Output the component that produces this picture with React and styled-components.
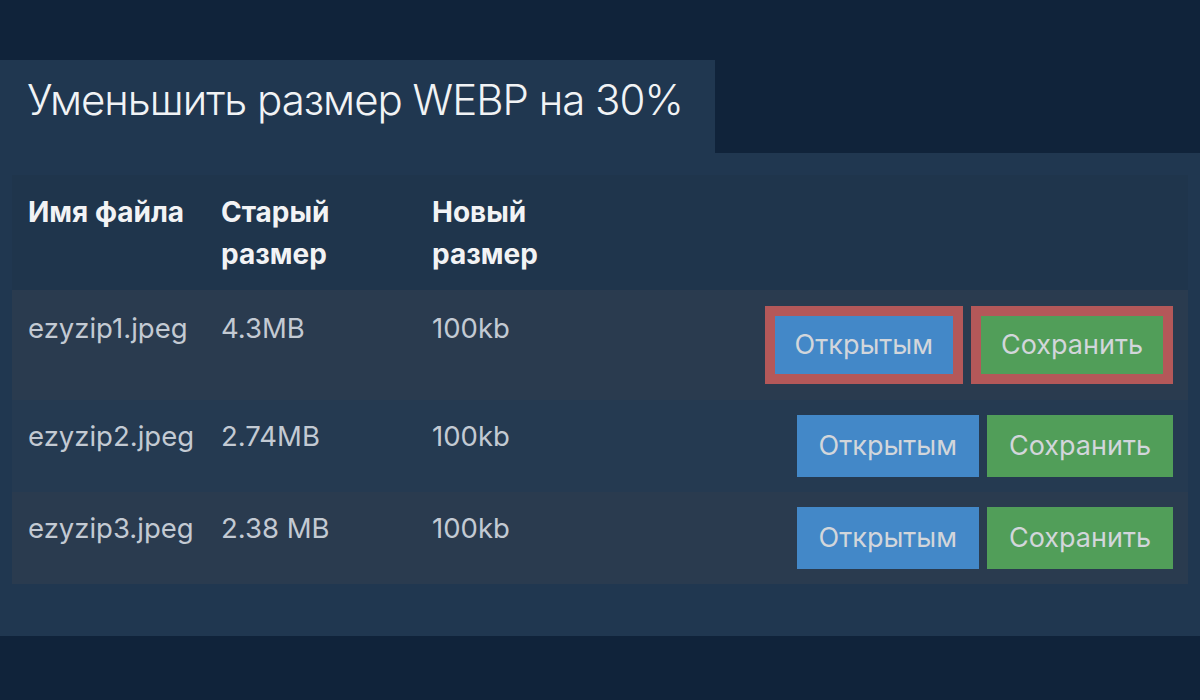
import React from 'react'
import styled, { createGlobalStyle } from 'styled-components'

const GlobalStyle = createGlobalStyle`
  html, body {
    margin: 0;
    background: #10233a;
    font-family: Inter, "Noto Sans", sans-serif;
  }
`

const Page = styled.div`
  width: 1200px;
  height: 700px;
  padding-top: 60px;
  box-sizing: border-box;
`

const Tab = styled.div`
  width: 715px;
  height: 93px;
  background: #203750;
  box-sizing: border-box;
  padding: 14px 0 0 27px;
`

const Title = styled.h1`
  margin: 0;
  font-size: 42px;
  line-height: 52px;
  font-weight: 300;
  color: #f1f3f5;
  letter-spacing: -1px;
  white-space: nowrap;
`

const Panel = styled.div`
  background: #203750;
  padding: 22px 12px 52px;
`

const Table = styled.div`
  display: grid;
  grid-template-columns: 193px 211px 150px 1fr;
`

const Row = styled.div`
  display: contents;
  & > div {
    background: ${p => p.bg};
  }
`

const HeadCell = styled.div`
  padding: 16px 16px 15px;
  font-size: 28px;
  line-height: 42px;
  font-weight: 700;
  color: #f2f3f5;
`

const Cell = styled.div`
  padding: ${p => (p.marked ? '17px' : '15px')} 16px;
  font-size: 27.5px;
  line-height: 42px;
  color: #c3cad3;
  white-space: nowrap;
`

const Actions = styled.div`
  display: flex;
  justify-content: flex-end;
  align-items: center;
  gap: 8px;
  padding: ${p => (p.marked ? '16px' : '15px')} 15px;
`

const Button = styled.button`
  border: ${p => (p.marked ? '10px solid #b45859' : 'none')};
  background: ${p => p.color};
  color: #d2d6db;
  font-family: Inter, "Noto Sans", sans-serif;
  font-size: 27px;
  line-height: 38px;
  padding: ${p => (p.marked ? '10px 20px' : '12px 22px')};
  cursor: pointer;
`

const files = [
  { name: 'ezyzip1.jpeg', old: '4.3MB', size: '100kb', marked: true },
  { name: 'ezyzip2.jpeg', old: '2.74MB', size: '100kb' },
  { name: 'ezyzip3.jpeg', old: '2.38 MB', size: '100kb' },
]

const App = () => {
  return (
    <Page>
      <GlobalStyle />
      <Tab>
        <Title>Уменьшить размер WEBP на 30%</Title>
      </Tab>
      <Panel>
        <Table>
          <Row bg="#1f354c">
            <HeadCell>Имя файла</HeadCell>
            <HeadCell>Старый размер</HeadCell>
            <HeadCell>Новый размер</HeadCell>
            <HeadCell />
          </Row>
          {files.map((f, i) => (
            <Row key={f.name} bg={i % 2 === 0 ? '#2a3b4f' : '#253a51'}>
              <Cell marked={f.marked}>{f.name}</Cell>
              <Cell marked={f.marked}>{f.old}</Cell>
              <Cell marked={f.marked}>{f.size}</Cell>
              <Actions marked={f.marked}>
                <Button color="#4388c8" marked={f.marked}>Открытым</Button>
                <Button color="#519e59" marked={f.marked}>Сохранить</Button>
              </Actions>
            </Row>
          ))}
        </Table>
      </Panel>
    </Page>
  )
}

export default App
